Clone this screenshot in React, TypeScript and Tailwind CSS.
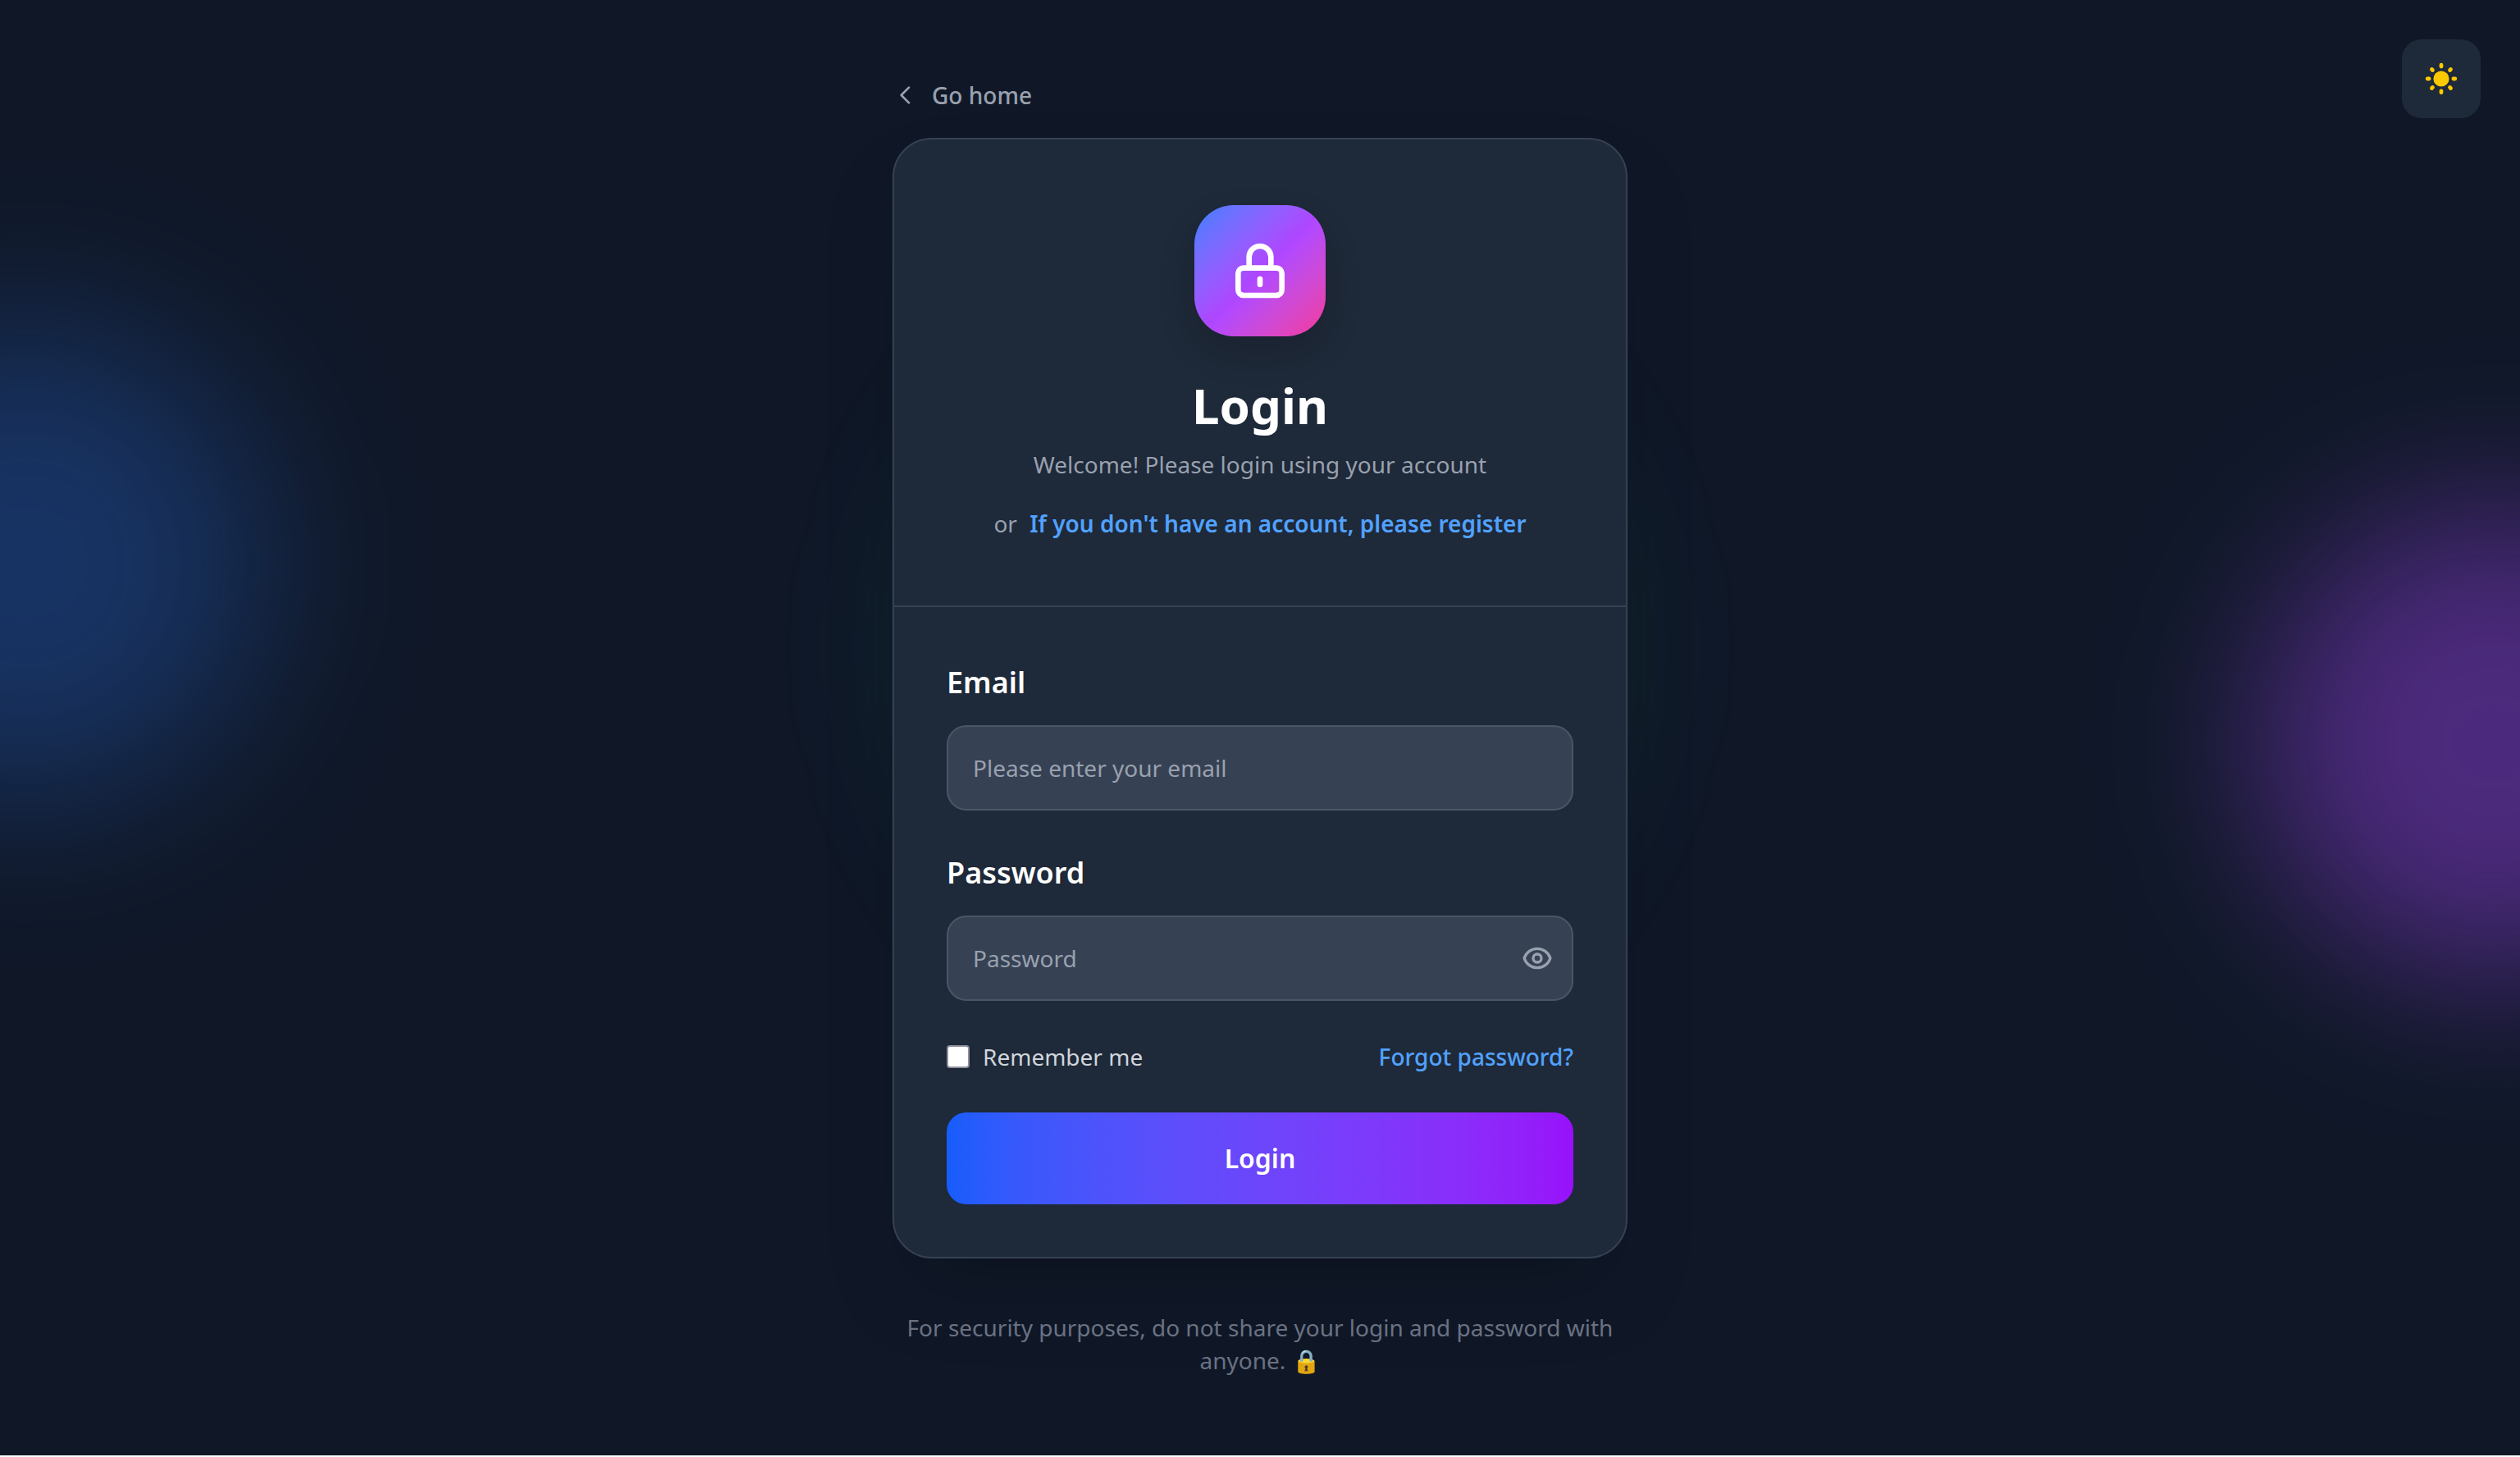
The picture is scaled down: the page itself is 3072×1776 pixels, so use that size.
import { useState } from "react";

export default function App() {
  const [shown, setShown] = useState(false);
  return (
    <div className="relative flex items-center justify-center overflow-hidden bg-gray-900 px-8 py-24 font-['Noto_Sans',sans-serif] text-[28px] leading-10">
      <div aria-hidden="true" className="pointer-events-none absolute inset-0 overflow-hidden">
        <div className="absolute top-[398px] -left-64 size-[576px] rounded-full bg-blue-500/27 blur-[100px]" />
        <div className="absolute top-[617px] -right-64 size-[576px] rounded-full bg-purple-500/38 blur-[96px]" />
        <div className="absolute top-[406px] left-1/2 size-[768px] -translate-x-1/2 rounded-full bg-emerald-500/20 blur-[96px]" />
      </div>

      <button
        type="button"
        aria-label="Toggle theme"
        className="absolute top-12 right-12 flex size-24 items-center justify-center rounded-3xl bg-gray-800 text-[#fcc800]"
      >
        <svg viewBox="0 0 20 20" className="size-12" fill="none" stroke="currentColor" strokeLinecap="round" strokeWidth="2">
          <circle cx="10" cy="10" r="4" fill="currentColor" stroke="none" />
          <path d="M10 3v.8M10 16.200v.8M3 10h.8M16.200 10h.8M5.200 5.200l.4.4M14.400 14.400l.4.4M5.200 14.800l.4-.4M14.400 5.600l.4-.4" />
        </svg>
      </button>

      <main className="relative w-full max-w-[896px]">
        <a href="#home" className="mb-8 inline-flex items-center gap-4 align-top font-medium text-gray-400">
          <svg viewBox="0 0 24 24" className="size-8" fill="none" stroke="currentColor" strokeWidth="2" strokeLinecap="round" strokeLinejoin="round">
            <path d="M15 19l-7-7 7-7" />
          </svg>
          Go home
        </a>

        <section className="rounded-[48px] border-2 border-gray-700 bg-gray-800 shadow-[0_50px_100px_-24px_rgba(0,0,0,0.25)]">
          <header className="border-b-2 border-gray-700 px-16 py-20 text-center">
            <div className="mx-auto mb-12 flex size-40 items-center justify-center rounded-[48px] bg-linear-to-br from-blue-500 via-purple-500 to-pink-500 shadow-[0_20px_50px_-6px_rgba(0,0,0,0.2)]">
              <svg viewBox="0 0 24 24" className="size-20 text-white" fill="none" stroke="currentColor" strokeWidth="2" strokeLinecap="round" strokeLinejoin="round">
                <path d="M12 15v2m-6 4h12a2 2 0 002-2v-6a2 2 0 00-2-2H6a2 2 0 00-2 2v6a2 2 0 002 2zm10-10V7a4 4 0 00-8 0v4h8z" />
              </svg>
            </div>
            <h1 className="mb-4 text-[60px] leading-[72px] font-bold text-white">Login</h1>
            <p className="mb-8 text-gray-400">Welcome! Please login using your account</p>
            <p className="text-gray-400">
              or{" "}
              <a href="#register" className="ml-2 font-semibold text-blue-400">
                If you don't have an account, please register
              </a>
            </p>
          </header>

          <form className="p-16" onSubmit={(e) => e.preventDefault()}>
            <label htmlFor="email" className="mb-6 block text-[36px] leading-[56px] font-semibold text-white">
              Email
            </label>
            <input
              id="email"
              type="email"
              placeholder="Please enter your email"
              className="mb-12 block h-26 w-full rounded-3xl border-2 border-gray-600 bg-gray-700 px-[30px] text-white placeholder:text-gray-400"
            />
            <label htmlFor="password" className="mb-6 block text-[36px] leading-[56px] font-semibold text-white">
              Password
            </label>
            <div className="relative mb-12">
              <input
                id="password"
                type={shown ? "text" : "password"}
                placeholder="Password"
                className="block h-26 w-full rounded-3xl border-2 border-gray-600 bg-gray-700 pr-24 pl-[30px] text-white placeholder:text-gray-400"
              />
              <button
                type="button"
                aria-label="Show password"
                onClick={() => setShown(!shown)}
                className="absolute inset-y-0 right-6 text-gray-400"
              >
                <svg viewBox="0 0 24 24" className="size-10" fill="none" stroke="currentColor" strokeWidth="2" strokeLinecap="round" strokeLinejoin="round">
                  <path d="M15 12a3 3 0 11-6 0 3 3 0 016 0z" />
                  <path d="M2.458 12C3.732 7.943 7.523 5 12 5c4.478 0 8.268 2.943 9.542 7-1.274 4.057-5.064 7-9.542 7-4.477 0-8.268-2.943-9.542-7z" />
                </svg>
              </button>
            </div>
            <div className="mb-12 flex items-center justify-between">
              <label className="flex items-center gap-4 text-gray-300">
                <input
                  type="checkbox"
                  className="size-7 appearance-none rounded-[4px] border-2 border-[#8f8f9d] bg-white shadow checked:bg-blue-600"
                />
                Remember me
              </label>
              <a href="#forgot" className="font-medium text-blue-400">
                Forgot password?
              </a>
            </div>
            <button
              type="submit"
              className="block h-28 w-full rounded-3xl bg-linear-to-r from-blue-600 to-purple-600 text-[32px] font-semibold text-white"
            >
              Login
            </button>
          </form>
        </section>

        <p className="mt-16 text-center text-gray-500">
          For security purposes, do not share your login and password with anyone. 🔒
        </p>
      </main>
    </div>
  );
}
